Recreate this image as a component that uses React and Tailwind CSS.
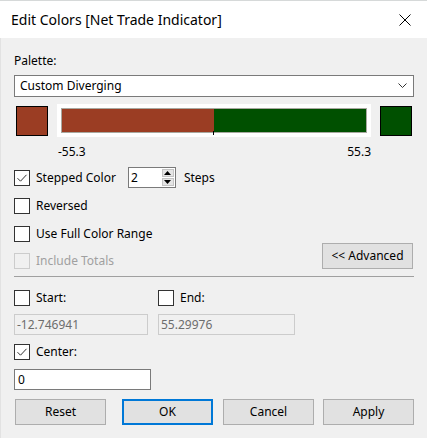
import React from "react";

function Check({checked, disabled}) {
    return (
        <span
            className={`w-4 h-4 shrink-0 border flex items-center justify-center ${
                disabled ? "border-[#cccccc] bg-[#f0f0f0]" : "border-[#333333] bg-white"
            }`}
        >
            {checked && (
                <svg width="12" height="12" viewBox="0 0 12 12">
                    <path d="M1.5 6.2 L4.5 9.2 L10.5 2.8" fill="none" stroke="#333" strokeWidth="1"/>
                </svg>
            )}
        </span>
    );
}

function CheckRow({label, checked, disabled}) {
    return (
        <div className="flex items-center h-4">
            <Check checked={checked} disabled={disabled}/>
            <span className={`ml-[6px] ${disabled ? "text-[#a0a0a0]" : "text-black"}`}>{label}</span>
        </div>
    );
}

function Btn({children, primary, className = ""}) {
    return (
        <div
            className={`w-[91px] h-[26px] flex items-center justify-center bg-[#e1e1e1] ${
                primary ? "border-2 border-[#0078d7]" : "border border-[#adadad]"
            } ${className}`}
        >
            {children}
        </div>
    );
}

export default function App() {
    return (
        <div
            className="w-[427px] h-[438px] bg-[#f0f0f0] text-[12px] leading-4 text-black overflow-hidden"
            style={{fontFamily: '"Segoe UI", "Noto Sans", sans-serif'}}
        >
            {/* title bar */}
            <div className="h-[38px] bg-white border-t border-[#d6d9d9] flex items-center justify-between pl-[11px] pr-[16px]">
                <span className="text-[14px] leading-5 text-black">Edit Colors [Net Trade Indicator]</span>
                <svg width="12" height="12" viewBox="0 0 12 12">
                    <path d="M0.5 0.5 L11.5 11.5 M11.5 0.5 L0.5 11.5" stroke="#000" strokeWidth="1"/>
                </svg>
            </div>

            <div className="h-[400px] border-l border-[#e2e2e2] pl-[13px] pr-[13px] flex flex-col">
                <div className="mt-[15px]">Palette:</div>

                <div className="mt-[6px] h-[22px] bg-white border border-[#7a7a7a] flex items-center justify-between pl-[5px] pr-[6px]">
                    <span>Custom Diverging</span>
                    <svg width="9" height="6" viewBox="0 0 9 6">
                        <path d="M0.5 0.5 L4.5 4.5 L8.5 0.5" fill="none" stroke="#333" strokeWidth="1"/>
                    </svg>
                </div>

                {/* swatches and bar */}
                <div className="mt-[7px] flex items-center h-[33px]">
                    <div className="ml-[2px] w-[32px] h-[30px] bg-[#9b3d23] border border-black"/>
                    <div className="ml-[9px] w-[314px] h-[33px] bg-white p-[4px] relative">
                        <div className="w-full h-full flex border border-[#a8a8a0]">
                            <div className="w-1/2 bg-[#9b3d23]"/>
                            <div className="w-1/2 bg-[#005000]"/>
                        </div>
                        <div className="absolute left-[156px] top-[27px] w-px h-[4px] bg-black"/>
                    </div>
                    <div className="ml-[9px] w-[32px] h-[30px] bg-[#005000] border border-black"/>
                </div>

                <div className="mt-[7px] flex justify-between pl-[44px] pr-[43px]">
                    <span>-55.3</span>
                    <span>55.3</span>
                </div>

                {/* stepped */}
                <div className="mt-[7px] flex items-center h-[21px]">
                    <Check checked/>
                    <span className="ml-[6px]">Stepped Color</span>
                    <div className="ml-[12px] w-[48px] h-[21px] bg-white border border-[#7a7a7a] flex items-center justify-between pl-[2px] pr-[1px]">
                        <span>2</span>
                        <div className="flex flex-col w-[12px] h-[17px] gap-px">
                            <div className="flex-1 bg-[#e5e5e5] border border-[#c4c4c4] flex items-center justify-center">
                                <svg width="7" height="4" viewBox="0 0 7 4"><path d="M0 4 L3.5 0 L7 4 Z" fill="#000"/></svg>
                            </div>
                            <div className="flex-1 bg-[#e5e5e5] border border-[#c4c4c4] flex items-center justify-center">
                                <svg width="7" height="4" viewBox="0 0 7 4"><path d="M0 0 L3.5 4 L7 0 Z" fill="#000"/></svg>
                            </div>
                        </div>
                    </div>
                    <span className="ml-[8px]">Steps</span>
                </div>

                <div className="mt-[10px]"><CheckRow label="Reversed"/></div>
                <div className="mt-[12px]"><CheckRow label="Use Full Color Range"/></div>

                <div className="mt-[1px] flex items-end justify-between">
                    <CheckRow label="Include Totals" disabled/>
                    <Btn className="mr-px">&lt;&lt; Advanced</Btn>
                </div>

                <div className="mt-[7px] h-px bg-[#a0a0a0]"/>

                <div className="mt-[13px] flex">
                    <div className="w-[144px]"><CheckRow label="Start:"/></div>
                    <CheckRow label="End:"/>
                </div>

                <div className="mt-[8px] flex">
                    <div className="w-[134px] h-[21px] border border-[#cccccc] flex items-center pl-[2px] text-[#6d6d6d]">-12.746941</div>
                    <div className="ml-[10px] w-[137px] h-[21px] border border-[#cccccc] flex items-center pl-[2px] text-[#6d6d6d]">55.29976</div>
                </div>

                <div className="mt-[9px]"><CheckRow label="Center:" checked/></div>

                <div className="mt-[9px] w-[137px] h-[21px] bg-white border border-[#7a7a7a] flex items-center pl-[3px]">0</div>

                <div className="mt-[9px] flex">
                    <Btn className="ml-px">Reset</Btn>
                    <Btn primary className="ml-[16px]">OK</Btn>
                    <Btn className="ml-[10px]">Cancel</Btn>
                    <Btn className="ml-[9px]">Apply</Btn>
                </div>
            </div>
        </div>
    );
}
